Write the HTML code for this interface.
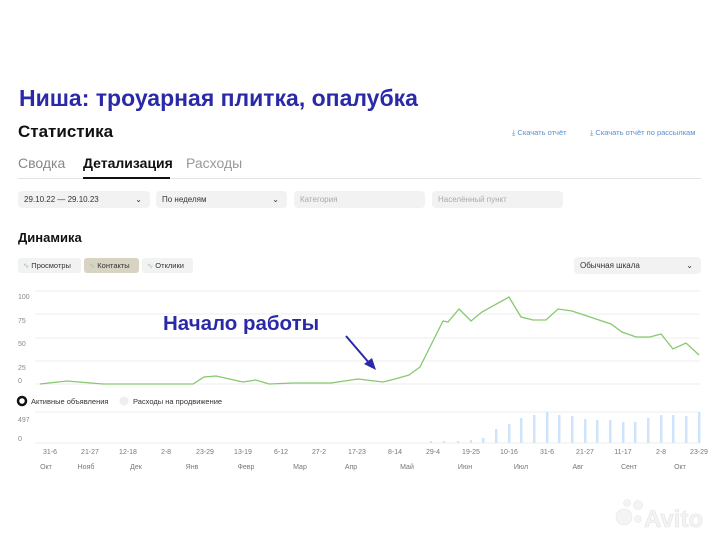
<!DOCTYPE html>
<html><head><meta charset="utf-8"><style>
*{margin:0;padding:0;box-sizing:border-box}
body{width:720px;height:539px;background:#fff;font-family:"Liberation Sans",sans-serif;position:relative;overflow:hidden;color:#111}
.a{position:absolute;white-space:nowrap}
.box{position:absolute;background:#f2f2f2;border-radius:4px;height:17px;font-size:8px;line-height:17px;padding-left:6px;color:#333}
.chev{position:absolute;right:8px;top:0;font-size:8px}
.pill{position:absolute;top:258px;height:15px;background:#f2f2f2;border-radius:3px;font-size:7.5px;line-height:15px;padding:0 5px;color:#333}
.pill i{color:#9c9;font-style:normal;margin-right:2px}
</style></head><body>
<div class="a" style="left:19px;top:85px;font-size:23px;font-weight:bold;color:#2a2aa8">Ниша: троуарная плитка, опалубка</div>
<div class="a" style="left:18px;top:122px;font-size:17px;font-weight:bold">Статистика</div>
<div class="a" style="left:512px;top:128px;font-size:7.5px;color:#5a8ed0">⤓ Скачать отчёт</div>
<div class="a" style="left:590px;top:128px;font-size:7.5px;color:#5a8ed0">⤓ Скачать отчёт по рассылкам</div>
<div class="a" style="left:18px;top:155px;font-size:14px;color:#888">Сводка</div>
<div class="a" style="left:83px;top:155px;font-size:14px;font-weight:bold">Детализация</div>
<div class="a" style="left:186px;top:155px;font-size:14px;color:#999">Расходы</div>
<div class="a" style="left:18px;top:178px;width:683px;height:1px;background:#e4e4e4"></div>
<div class="a" style="left:83px;top:177px;width:87px;height:2px;background:#111"></div>
<div class="box" style="left:18px;top:191px;width:132px">29.10.22 — 29.10.23<span class="chev">⌄</span></div>
<div class="box" style="left:156px;top:191px;width:131px">По неделям<span class="chev">⌄</span></div>
<div class="box" style="left:294px;top:191px;width:131px;color:#aaa">Категория</div>
<div class="box" style="left:432px;top:191px;width:131px;color:#aaa">Населённый пункт</div>
<div class="a" style="left:18px;top:230px;font-size:13px;font-weight:bold">Динамика</div>
<div class="pill" style="left:18px;width:63px"><i>∿</i>Просмотры</div>
<div class="pill" style="left:84px;width:55px;background:#d8d3c3"><i>∿</i>Контакты</div>
<div class="pill" style="left:142px;width:51px"><i>∿</i>Отклики</div>
<div class="box" style="left:574px;top:257px;width:127px">Обычная шкала<span class="chev">⌄</span></div>
<svg class="a" style="left:0;top:0" width="720" height="539">
<g stroke="#eee" stroke-width="1">
<line x1="35" y1="291" x2="700" y2="291"/><line x1="35" y1="314" x2="700" y2="314"/><line x1="35" y1="338" x2="700" y2="338"/><line x1="35" y1="361" x2="700" y2="361"/><line x1="35" y1="384" x2="700" y2="384"/>
<line x1="35" y1="412" x2="700" y2="412"/><line x1="35" y1="443" x2="700" y2="443"/>
</g>
<g font-size="7" fill="#888" font-family="Liberation Sans">
<text x="18" y="299">100</text><text x="18" y="323">75</text><text x="18" y="346">50</text><text x="18" y="370">25</text><text x="18" y="383">0</text>
<text x="18" y="422">497</text><text x="18" y="441">0</text>
</g>
<polyline fill="none" stroke="#86c96f" stroke-width="1.3" points="40,384 67,381 103,384 193,384 204,377 216,376 243,382 256,380 269,384 294,383 317,383 331,383 358,379 383,382 395,379 409,375 420,367 443,321 448,322 459,309 471,321 482,312 509,297 521,317 533,320 546,320 558,309 572,311 611,324 622,332 636,337 650,337 661,334 673,349 686,343 699,355"/>
<g fill="#cfe4fa">
<rect x="430" y="441" width="2" height="2"/><rect x="443" y="441" width="2" height="2"/><rect x="457" y="441" width="2" height="2"/><rect x="470" y="440" width="2" height="3"/>
<rect x="482" y="438" width="2.5" height="5"/><rect x="495" y="429" width="2.5" height="14"/><rect x="508" y="424" width="2.5" height="19"/><rect x="520" y="418" width="2.5" height="25"/><rect x="533" y="415" width="2.5" height="28"/><rect x="546" y="412" width="2.5" height="31"/><rect x="558" y="415" width="2.5" height="28"/><rect x="571" y="416" width="2.5" height="27"/><rect x="584" y="419" width="2.5" height="24"/><rect x="596" y="420" width="2.5" height="23"/><rect x="609" y="420" width="2.5" height="23"/><rect x="622" y="422" width="2.5" height="21"/><rect x="634" y="422" width="2.5" height="21"/><rect x="647" y="418" width="2.5" height="25"/><rect x="660" y="415" width="2.5" height="28"/><rect x="672" y="415" width="2.5" height="28"/><rect x="685" y="416" width="2.5" height="27"/><rect x="698" y="412" width="2.5" height="31"/>
</g>
<circle cx="22" cy="401" r="4" fill="#fff" stroke="#111" stroke-width="2.5"/>
<circle cx="124" cy="401" r="4.5" fill="#eee"/>
<g font-size="7.5" fill="#333" font-family="Liberation Sans"><text x="31" y="404">Активные объявления</text><text x="133" y="404">Расходы на продвижение</text></g>
<g font-size="7" fill="#777" font-family="Liberation Sans" text-anchor="middle">
<text x="50" y="454">31-6</text><text x="90" y="454">21-27</text><text x="128" y="454">12-18</text><text x="166" y="454">2-8</text><text x="205" y="454">23-29</text><text x="243" y="454">13-19</text><text x="281" y="454">6-12</text><text x="319" y="454">27-2</text><text x="357" y="454">17-23</text><text x="395" y="454">8-14</text><text x="433" y="454">29-4</text><text x="471" y="454">19-25</text><text x="509" y="454">10-16</text><text x="547" y="454">31-6</text><text x="585" y="454">21-27</text><text x="623" y="454">11-17</text><text x="661" y="454">2-8</text><text x="699" y="454">23-29</text>
<text x="46" y="469">Окт</text><text x="86" y="469">Нояб</text><text x="136" y="469">Дек</text><text x="192" y="469">Янв</text><text x="246" y="469">Февр</text><text x="300" y="469">Мар</text><text x="351" y="469">Апр</text><text x="407" y="469">Май</text><text x="465" y="469">Июн</text><text x="521" y="469">Июл</text><text x="578" y="469">Авг</text><text x="629" y="469">Сент</text><text x="680" y="469">Окт</text>
</g>
<text x="163" y="330" font-size="20.5" font-weight="bold" fill="#2a2aa8" font-family="Liberation Sans">Начало работы</text>
<line x1="346" y1="336" x2="370" y2="364" stroke="#2a2aa8" stroke-width="2"/>
<polygon points="376,370 364,364 372,358" fill="#2a2aa8"/>
<g fill="#f4f4f4" stroke="#e6e6e6" stroke-width="0.6">
<circle cx="624" cy="517" r="8"/><circle cx="638" cy="505" r="4.5"/><circle cx="627" cy="503" r="3.5"/><circle cx="638" cy="519" r="3.5"/>
</g>
<text x="644" y="527" font-size="24" font-weight="bold" fill="#f4f4f4" stroke="#e3e3e3" stroke-width="0.6" font-family="Liberation Sans">Avito</text>
</svg>
</body></html>
